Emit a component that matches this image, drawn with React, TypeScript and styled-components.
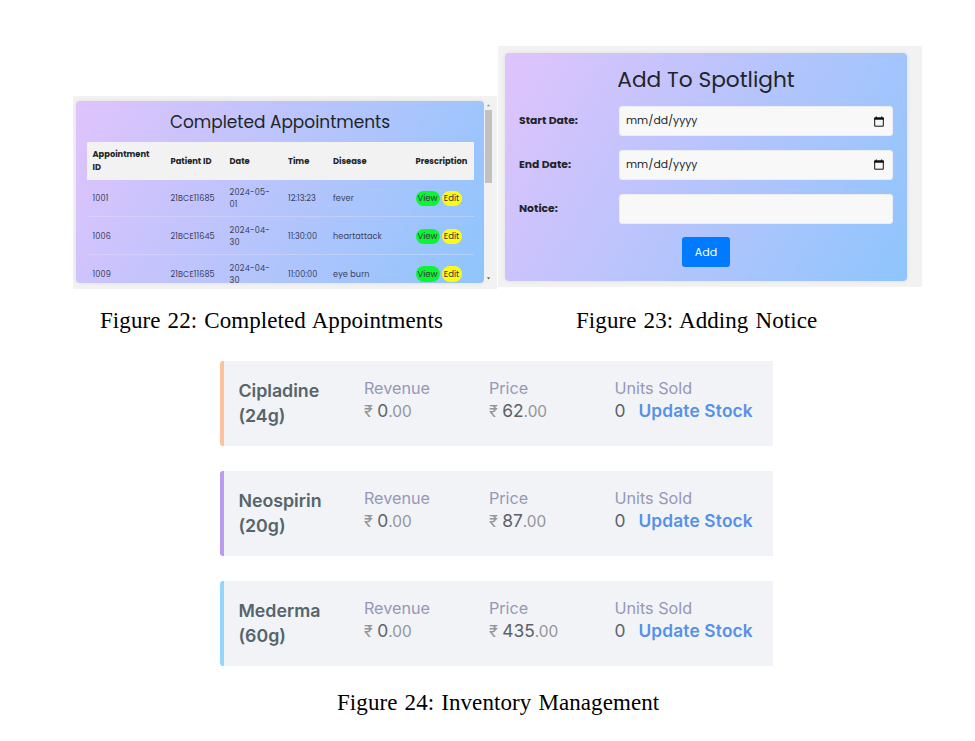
import React from "react";
import styled, { createGlobalStyle } from "styled-components";

const GlobalStyle = createGlobalStyle`
  *, *::before, *::after { box-sizing: border-box; }
  body { margin: 0; background: #fff; }
`;

const Page = styled.main`
  width: 975px;
  height: 741px;
  overflow: hidden;
  background: #fff;
`;

const TopFigures = styled.section`
  display: flex;
  align-items: flex-start;
  gap: 1px;
  padding: 46px 0 0 73px;
`;

const Figure = styled.figure<{ $top?: number }>`
  margin: ${(p) => p.$top ?? 0}px 0 0;
  width: 424px;
`;

const Caption = styled.figcaption<{ $indent: number; $top: number }>`
  padding-left: ${(p) => p.$indent}px;
  margin-top: ${(p) => p.$top}px;
  font: 23px/28px "Liberation Serif", "Times New Roman", serif;
  letter-spacing: 0.08px;
  word-spacing: 1.2px;
  white-space: nowrap;
  color: #000;
`;

const Backdrop = styled.div<{ $height: number; $pad: string }>`
  display: flex;
  height: ${(p) => p.$height}px;
  padding: ${(p) => p.$pad};
  background: #f2f2f2;
  font-family: Poppins, Inter, sans-serif;
  font-feature-settings: "cv11";
  color: #212529;
`;

const Card = styled.div<{ $width: number; $height: number; $pad: string }>`
  width: ${(p) => p.$width}px;
  height: ${(p) => p.$height}px;
  padding: ${(p) => p.$pad};
  overflow: hidden;
  border-radius: 4px;
  background: linear-gradient(120deg, #e0c3fc 0%, #8ec5fc 100%);
  box-shadow: 0 0 4px rgba(0, 0, 0, 0.08);
`;

const CardTitle = styled.h2<{ $size: number; $line: number; $gap: number }>`
  margin: 0 0 ${(p) => p.$gap}px;
  text-align: center;
  font-weight: 400;
  font-size: ${(p) => p.$size}px;
  line-height: ${(p) => p.$line}px;
  white-space: nowrap;
`;

const Row = styled.div<{ $head?: boolean }>`
  display: grid;
  grid-template-columns: 78px 59px 58.5px 45px 82.5px 58px;
  align-items: center;
  height: ${(p) => (p.$head ? 37.5 : 37.9)}px;
  padding: ${(p) => (p.$head ? 0 : 1)}px 0 0 6px;
  background: ${(p) => (p.$head ? "#f2f2f2" : "transparent")};
  border-bottom: ${(p) => (p.$head ? "0" : "1px solid rgba(222, 226, 240, 0.4)")};
  font-size: ${(p) => (p.$head ? 8.3 : 8.1)}px;
  font-weight: ${(p) => (p.$head ? 700 : 400)};
  line-height: 12.5px;
  color: ${(p) => (p.$head ? "#212529" : "#3a3f5c")};
`;

const Cell = styled.span<{ $track?: number }>`
  letter-spacing: ${(p) => p.$track ?? 0}px;
  white-space: pre-line;
`;

const Actions = styled.div`
  display: flex;
  gap: 2px;
`;

const Pill = styled.button<{ $color: string; $width: number }>`
  width: ${(p) => p.$width}px;
  height: 15.5px;
  padding: 0;
  border: 0;
  border-radius: 8px;
  background: ${(p) => p.$color};
  font: inherit;
  font-size: 8.5px;
  color: #30343c;
`;

const ScrollTrack = styled.div`
  display: flex;
  flex-direction: column;
  align-items: center;
  width: 9px;
  height: 182px;
  background: #f1f1f1;
`;

const ScrollThumb = styled.div`
  width: 7px;
  height: 73px;
  margin-bottom: auto;
  background: #c1c1c1;
`;

const Arrow = styled.svg`
  display: block;
  flex: none;
  width: 9px;
  height: 9px;
`;

const Field = styled.label`
  display: grid;
  grid-template-columns: 100px 274px;
  align-items: center;
  height: 30px;
  margin-bottom: 13.8px;
  font-size: 10.8px;
  font-weight: 700;
`;

const Input = styled.div`
  display: flex;
  align-items: center;
  justify-content: space-between;
  height: 30px;
  padding: 0 8px 0 6px;
  border: 1px solid #ececf4;
  border-radius: 3px;
  background: #f8f8f8;
  font-size: 10.8px;
  font-weight: 400;
`;

const AddButton = styled.button`
  display: block;
  width: 48px;
  height: 30px;
  margin: 0 auto 0 163px;
  padding: 0;
  border: 0;
  border-radius: 3px;
  background: #007bff;
  color: #fff;
  font: inherit;
  font-size: 11px;
`;

const Inventory = styled.section`
  display: flex;
  flex-direction: column;
  gap: 25px;
  width: 553px;
  margin: 26.4px 0 0 220px;
`;

const Item = styled.article<{ $accent: string }>`
  display: grid;
  grid-template-columns: 125.5px 125px 125.5px 1fr;
  height: 84.8px;
  padding: 16px 0 0 14.4px;
  border-left: 4px solid ${(p) => p.$accent};
  border-radius: 3px 0 0 3px;
  background: #f1f3f6;
  font-family: Inter, sans-serif;
  font-size: 16.2px;
  line-height: 22.6px;
  color: #93959b;
  white-space: nowrap;
`;

const ItemName = styled.h3`
  margin: 1px 0 0;
  font-size: 17.8px;
  font-weight: 600;
  line-height: 25px;
  color: #56646b;
`;

const Label = styled.div`
  color: #9698b8;
`;

const Whole = styled.span`
  font-size: 17.4px;
  color: #5c6268;
`;

const Cents = styled.span`
  font-size: 15.4px;
`;

const StockLink = styled.a`
  margin-left: 13px;
  font-size: 17.3px;
  font-weight: 600;
  letter-spacing: 0.18px;
  color: #5590ec;
`;

const CalendarIcon = () => (
  <svg width="10" height="11" viewBox="0 0 10 11">
    <path d="M.7 2h8.6v8.2H.7z" fill="none" stroke="#111" strokeWidth="1" />
    <path d="M.2 1.5h9.6v2.3H.2zM1.8.5h1.1v1.2H1.8zM7.1.5h1.1v1.2H7.1z" fill="#111" />
  </svg>
);

const appointments = [
  ["1001", "21BCE11685", "2024-05-\n01", "12:13:23", "fever"],
  ["1006", "21BCE11645", "2024-04-\n30", "11:30:00", "heartattack"],
  ["1009", "21BCE11685", "2024-04-\n30", "11:00:00", "eye burn"],
];

const tracks = [0.2, 0.12, 0.25, 0.05, 0.12];

const items = [
  { name: "Cipladine", size: "(24g)", price: "62", accent: "#fdc29b" },
  { name: "Neospirin", size: "(20g)", price: "87", accent: "#bb9bf0" },
  { name: "Mederma", size: "(60g)", price: "435", accent: "#94d5fb" },
];

export default function App() {
  return (
    <Page>
      <GlobalStyle />
      <TopFigures>
        <Figure $top={50}>
          <Backdrop $height={193} $pad="5px 3px">
            <Card $width={408} $height={182} $pad="9px 10.5px 0">
              <CardTitle $size={16.95} $line={24} $gap={8}>Completed Appointments</CardTitle>
              <Row $head>
                <Cell>{"Appointment\nID"}</Cell>
                <Cell>Patient ID</Cell>
                <Cell>Date</Cell>
                <Cell>Time</Cell>
                <Cell>Disease</Cell>
                <Cell>Prescription</Cell>
              </Row>
              {appointments.map((cells) => (
                <Row key={cells[0]}>
                  {cells.map((text, i) => (
                    <Cell key={i} $track={tracks[i]}>{text}</Cell>
                  ))}
                  <Actions>
                    <Pill $color="#0cf534" $width={24}>View</Pill>
                    <Pill $color="#fbfb14" $width={20}>Edit</Pill>
                  </Actions>
                </Row>
              ))}
            </Card>
            <ScrollTrack>
              <Arrow viewBox="0 0 9 9"><path d="M2.8 5.3 4.5 3.5l1.7 1.8z" fill="#888" /></Arrow>
              <ScrollThumb />
              <Arrow viewBox="0 0 9 9"><path d="M2.8 3.5h3.4L4.5 5.3z" fill="#444" /></Arrow>
            </ScrollTrack>
          </Backdrop>
          <Caption $indent={27} $top={18}>Figure 22: Completed Appointments</Caption>
        </Figure>
        <Figure>
          <Backdrop $height={241} $pad="7px">
            <Card $width={402} $height={228} $pad="9px 14px">
              <CardTitle $size={21.7} $line={35} $gap={9}>Add To Spotlight</CardTitle>
              <Field>Start Date:<Input>mm/dd/yyyy<CalendarIcon /></Input></Field>
              <Field>End Date:<Input>mm/dd/yyyy<CalendarIcon /></Input></Field>
              <Field>Notice:<Input /></Field>
              <AddButton>Add</AddButton>
            </Card>
          </Backdrop>
          <Caption $indent={78} $top={20}>Figure 23: Adding Notice</Caption>
        </Figure>
      </TopFigures>
      <Inventory>
        {items.map((item) => (
          <Item key={item.name} $accent={item.accent}>
            <ItemName>{item.name}<br />{item.size}</ItemName>
            <div><Label>Revenue</Label>₹ <Whole>0</Whole><Cents>.00</Cents></div>
            <div><Label>Price</Label>₹ <Whole>{item.price}</Whole><Cents>.00</Cents></div>
            <div><Label>Units Sold</Label><Whole>0</Whole><StockLink>Update Stock</StockLink></div>
          </Item>
        ))}
      </Inventory>
      <Caption $indent={337} $top={23}>Figure 24: Inventory Management</Caption>
    </Page>
  );
}
